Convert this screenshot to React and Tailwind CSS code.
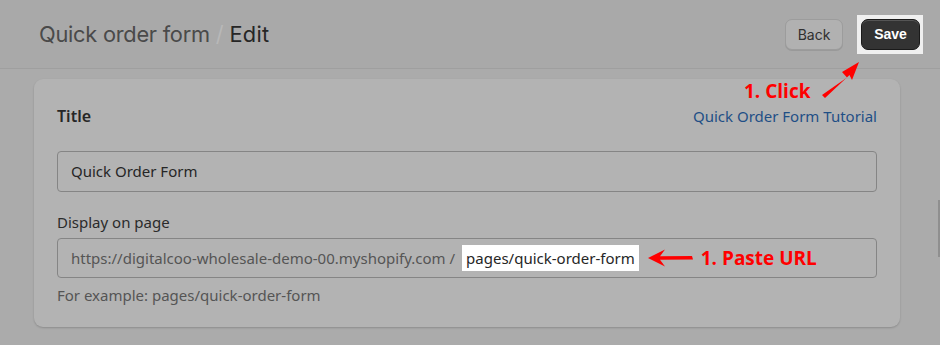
export default function App() {
  const sans = { fontFamily: '"Open Sans", "Noto Sans", sans-serif' };
  return (
    <div className="relative w-[940px] h-[345px] overflow-hidden bg-[#ababab]" style={sans}>
      <header className="h-[69px] flex items-center justify-between pl-[39px] pr-[17px] border-b border-[#9f9f9f] bg-[#a9a9a9]">
        <div className="flex items-center text-[21.8px] tracking-[-0.25px]" style={{ fontFamily: 'Inter, "Noto Sans", sans-serif' }}>
          <span className="text-[#4a4a4a]">Quick order form</span>
          <span className="ml-[6px] mr-[6px] text-[#b8b8b8]">/</span>
          <span className="text-[#262626] tracking-[0.3px]">Edit</span>
        </div>
        <div className="flex items-center gap-[14px]">
          <button className="h-[31px] w-[58px] rounded-[7px] bg-[#b1b1b1] border border-[#9c9c9c] shadow-[0_1px_0_#999] text-[14px] text-[#303030]" style={{ fontFamily: 'Inter, sans-serif' }}>Back</button>
          <div className="bg-[#efefef] p-[4px] pr-[3px]">
            <button className="h-[31px] w-[59px] rounded-[7px] bg-[#333333] border border-[#1a1a1a] text-[14px] font-bold text-white shadow-[inset_0_1px_0_#555]" style={{ fontFamily: '"Liberation Sans", Arial, sans-serif' }}>Save</button>
          </div>
        </div>
      </header>
      <div className="pl-[34px] pt-[10px]">
        <div className="w-[866px] h-[248px] rounded-[9px] bg-[#b3b3b3] shadow-[0_1px_2px_rgba(0,0,0,0.18)] px-[23px] pt-[26px]">
          <div className="flex items-center justify-between h-[22px]">
            <span className="text-[16px] font-semibold text-[#262626]" style={{ fontFamily: '"Noto Sans", sans-serif' }}>Title</span>
            <span className="text-[15px] text-[#1f4f86]" style={{ fontFamily: '"Noto Sans", sans-serif' }}>Quick Order Form Tutorial</span>
          </div>
          <div className="mt-[24px] h-[41px] rounded-[4px] border border-[#858585] flex items-center pl-[13px] text-[15px] text-[#262626]" style={{ fontFamily: '"Noto Sans", sans-serif' }}>
            Quick Order Form
          </div>
          <div className="mt-[20px] h-[20px] flex items-center text-[15px] text-[#2b2b2b]" style={{ fontFamily: '"Noto Sans", sans-serif' }}>Display on page</div>
          <div className="mt-[6px] h-[40px] rounded-[4px] border border-[#858585] flex items-center pl-[13px] text-[15px]" style={{ fontFamily: '"Noto Sans", sans-serif' }}>
            <span className="text-[#555555]">https://digitalcoo-wholesale-demo-00.myshopify.com /</span>
            <span className="ml-[7px] bg-white px-[4px] h-[26px] flex items-center text-[#262626]">pages/quick-order-form</span>
            <svg width="46" height="18" viewBox="0 0 46 18" className="ml-[9px]">
              <path d="M0 9 L17 0.5 L12 7.3 L44 7 L45 10.5 L12 10.7 L17 17.5 Z" fill="#ff0000" />
            </svg>
            <span className="ml-[7px] text-[19px] font-bold text-[#ff0000]" style={{ fontFamily: '"Open Sans", sans-serif' }}>1. Paste URL</span>
          </div>
          <div className="mt-[7px] h-[20px] flex items-center text-[15px] text-[#555555]" style={{ fontFamily: '"Noto Sans", sans-serif' }}>For example: pages/quick-order-form</div>
        </div>
      </div>
      <span className="absolute left-[744px] top-[78px] text-[19px] font-bold text-[#ff0000] leading-[26px]" style={{ fontFamily: '"Open Sans", sans-serif' }}>1. Click</span>
      <svg width="42" height="42" viewBox="0 0 42 42" className="absolute left-[820px] top-[58px]">
        <path d="M2 37 L27 19.5 L22 14 L39 4 L32 22 L29.5 17 L5 40 Z" fill="#ff0000" />
      </svg>
      <div className="absolute right-0 top-[200px] w-[2px] h-[57px] bg-[#8f8f8f]" />
    </div>
  );
}
